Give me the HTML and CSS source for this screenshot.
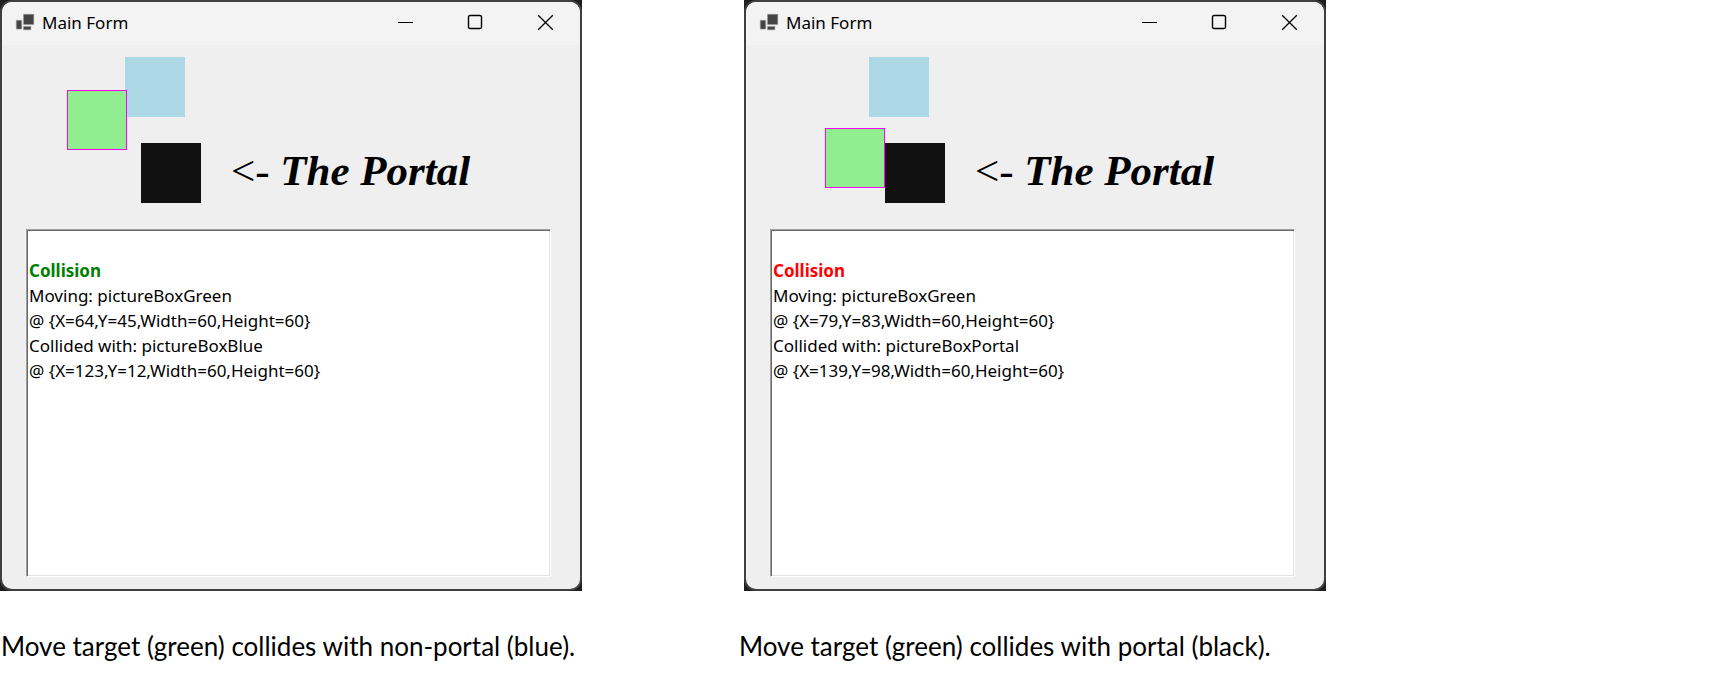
FILE: index.html
```html
<!DOCTYPE html>
<html lang="en">
<head>
<meta charset="utf-8">
<title>Main Form</title>
<link rel="stylesheet" href="styles.css">
</head>
<body>
<main class="gallery">
  <figure class="example">
    <div class="backdrop">
      <section class="window" aria-label="Main Form">
        <header class="titlebar">
          <svg class="app-icon" width="20" height="20" viewBox="0 0 20 20" aria-hidden="true"><g fill="#444" stroke="#999" stroke-width=".6"><path d="M8.5 1.3h10.3v10.3H8.5zM1.3 7.3h5.4v8.8H1.3zM8.5 13.4h7.4v3.4H8.5z"/></g></svg>
          <h1 class="title">Main Form</h1>
          <div class="controls">
            <button class="control" type="button" aria-label="Minimize"><svg width="17" height="17" viewBox="0 0 17 17"><path d="M1 8.5h15" stroke="#000"/></svg></button>
            <button class="control" type="button" aria-label="Maximize"><svg width="17" height="17" viewBox="0 0 17 17"><rect x="1.5" y="1.5" width="13" height="13" rx="1.4" fill="none" stroke="#000" stroke-width="1.4"/></svg></button>
            <button class="control" type="button" aria-label="Close"><svg width="17" height="17" viewBox="0 0 17 17"><path d="M1.2 1.2l14.6 14.6M15.8 1.2L1.2 15.8" stroke="#000" stroke-width="1.3"/></svg></button>
          </div>
        </header>
        <div class="form">
          <div class="canvas">
            <div class="box blue"></div>
            <div class="box portal"></div>
            <div class="box green at-blue"></div>
            <p class="portal-label"><span class="arrow">&lt;-</span> The Portal</p>
          </div>
          <div class="log" role="log">
            <p class="event ok">Collision</p>
            <p>Moving: pictureBoxGreen</p>
            <p>@ {X=64,Y=45,Width=60,Height=60}</p>
            <p>Collided with: pictureBoxBlue</p>
            <p>@ {X=123,Y=12,Width=60,Height=60}</p>
          </div>
        </div>
      </section>
    </div>
    <figcaption class="caption">Move target (green) collides with non-portal (blue).</figcaption>
  </figure>
  <figure class="example second">
    <div class="backdrop">
      <section class="window" aria-label="Main Form">
        <header class="titlebar">
          <svg class="app-icon" width="20" height="20" viewBox="0 0 20 20" aria-hidden="true"><g fill="#444" stroke="#999" stroke-width=".6"><path d="M8.5 1.3h10.3v10.3H8.5zM1.3 7.3h5.4v8.8H1.3zM8.5 13.4h7.4v3.4H8.5z"/></g></svg>
          <h1 class="title">Main Form</h1>
          <div class="controls">
            <button class="control" type="button" aria-label="Minimize"><svg width="17" height="17" viewBox="0 0 17 17"><path d="M1 8.5h15" stroke="#000"/></svg></button>
            <button class="control" type="button" aria-label="Maximize"><svg width="17" height="17" viewBox="0 0 17 17"><rect x="1.5" y="1.5" width="13" height="13" rx="1.4" fill="none" stroke="#000" stroke-width="1.4"/></svg></button>
            <button class="control" type="button" aria-label="Close"><svg width="17" height="17" viewBox="0 0 17 17"><path d="M1.2 1.2l14.6 14.6M15.8 1.2L1.2 15.8" stroke="#000" stroke-width="1.3"/></svg></button>
          </div>
        </header>
        <div class="form">
          <div class="canvas">
            <div class="box blue"></div>
            <div class="box portal"></div>
            <div class="box green at-portal"></div>
            <p class="portal-label"><span class="arrow">&lt;-</span> The Portal</p>
          </div>
          <div class="log" role="log">
            <p class="event alert">Collision</p>
            <p>Moving: pictureBoxGreen</p>
            <p>@ {X=79,Y=83,Width=60,Height=60}</p>
            <p>Collided with: pictureBoxPortal</p>
            <p>@ {X=139,Y=98,Width=60,Height=60}</p>
          </div>
        </div>
      </section>
    </div>
    <figcaption class="caption">Move target (green) collides with portal (black).</figcaption>
  </figure>
</main>
</body>
</html>
```
FILE: styles.css
```css
* {
  box-sizing: border-box;
}

body,
h1,
p,
figure {
  margin: 0;
}

body {
  background: #fff;
  color: #000;
  font-family: "Noto Sans", "Open Sans", sans-serif;
}

.gallery {
  display: grid;
  grid-template-columns: 582fr 156fr 588fr 394fr;
}

.example.second {
  grid-column: 3;
}

.second .backdrop {
  margin-left: 6px;
}

.backdrop {
  background: #1e1e1e;
}

.window {
  border: 2px solid #3f3f3f;
  border-radius: 12px;
  background: #efefef;
  overflow: hidden;
}

.titlebar {
  display: flex;
  align-items: center;
  height: 43px;
  padding: 0 0 2px 13px;
  background: #f3f3f3;
}

.title {
  flex: 1;
  margin-left: 7px;
  font-size: 17px;
  font-weight: 400;
  line-height: 24px;
}

.controls {
  display: flex;
  align-self: stretch;
}

.control {
  display: flex;
  align-items: center;
  justify-content: center;
  width: 70px;
  padding: 0;
  border: 0;
  background: none;
}

.form {
  padding: 0 29px 12px 24px;
}

.canvas {
  position: relative;
  height: 184px;
  margin-left: -24px;
}

.box {
  position: absolute;
  width: 60px;
  height: 60px;
}

.blue {
  left: 123px;
  top: 12px;
  background: #add8e6;
}

.portal {
  left: 139px;
  top: 98px;
  background: #111;
}

.green {
  border: 1px solid #f0f;
  background: #90ee90;
}

.at-blue {
  left: 65px;
  top: 45px;
}

.at-portal {
  left: 79px;
  top: 83px;
}

.portal-label {
  position: absolute;
  left: 229px;
  top: 100px;
  font: italic 700 43px/52px "Liberation Serif", serif;
  white-space: nowrap;
}

.arrow {
  font-style: normal;
  font-weight: 400;
}

.log {
  min-height: 348px;
  padding: 28px 2px 2px;
  border: 1px solid;
  border-color: #a0a0a0 #fff #fff #a0a0a0;
  background: #fff;
  box-shadow: inset 1px 1px 0 #696969, inset -1px -1px 0 #e3e3e3;
  font-size: 17px;
  line-height: 25px;
}

.event {
  font-weight: 700;
}

.ok {
  color: #008000;
}

.alert {
  color: #f00;
}

.caption {
  padding: 37px 0 0 1px;
  font: 400 26px/36px Lato, "Open Sans", sans-serif;
  white-space: nowrap;
}
```
